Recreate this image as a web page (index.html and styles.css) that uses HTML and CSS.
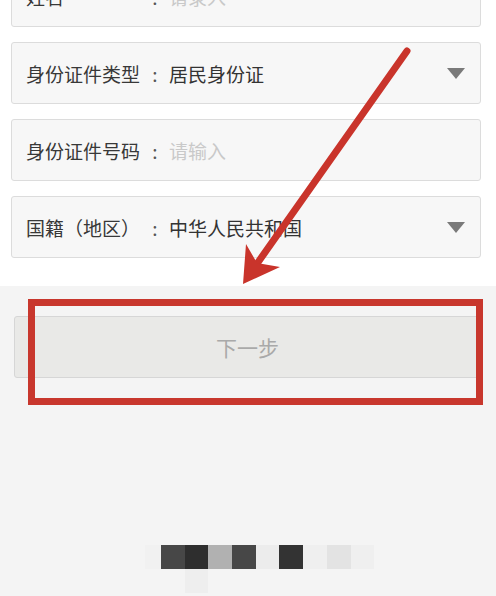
FILE: index.html
```html
<!DOCTYPE html>
<html lang="zh-CN">
<head>
<meta charset="utf-8">
<title>实名认证</title>
<link rel="stylesheet" href="styles.css">
</head>
<body>
<div class="page">
  <section class="form">
    <div class="field">
      <span class="label">姓名</span><span class="colon">:</span><span class="placeholder">请录入</span>
    </div>
    <div class="field">
      <span class="label">身份证件类型</span><span class="colon">:</span><span class="value">居民身份证</span>
      <svg class="caret" width="18" height="11" viewBox="0 0 18 11"><polygon points="0,0 18,0 9,11" fill="#7a7a7a"/></svg>
    </div>
    <div class="field">
      <span class="label">身份证件号码</span><span class="colon">:</span><span class="placeholder">请输入</span>
    </div>
    <div class="field">
      <span class="label">国籍（地区）</span><span class="colon">:</span><span class="value">中华人民共和国</span>
      <svg class="caret" width="18" height="11" viewBox="0 0 18 11"><polygon points="0,0 18,0 9,11" fill="#7a7a7a"/></svg>
    </div>
  </section>
  <section class="footer">
    <button class="next" type="button">下一步</button>
    <div class="mosaic">
      <div class="mrow">
        <span class="px" style="background:#f1f1f1"></span>
        <span class="px" style="background:#474747"></span>
        <span class="px" style="background:#2e2e2e"></span>
        <span class="px" style="background:#b1b1b1"></span>
        <span class="px" style="background:#474747"></span>
        <span class="px" style="background:#ececec"></span>
        <span class="px" style="background:#333333"></span>
        <span class="px" style="background:#efefef"></span>
        <span class="px" style="background:#e3e3e3"></span>
        <span class="px" style="background:#efefef"></span>
      </div>
      <div class="mrow">
        <span class="px" style="background:transparent"></span>
        <span class="px" style="background:transparent"></span>
        <span class="px" style="background:#eeeeee"></span>
      </div>
    </div>
  </section>
  <div class="highlight"></div>
  <svg class="arrow" width="496" height="596" viewBox="0 0 496 596">
    <line x1="407" y1="51" x2="254" y2="268" stroke="#c9342b" stroke-width="7" stroke-linecap="round"/>
    <polygon points="243,284 246,244 257,263 280,267" fill="#c9342b"/>
  </svg>
</div>
</body>
</html>
```
FILE: styles.css
```css
html, body {
  margin: 0;
  padding: 0;
}
body {
  width: 496px;
  height: 596px;
  overflow: hidden;
  background: #f4f4f4;
  font-family: "Noto Sans CJK SC", "Noto Sans", sans-serif;
}
.page {
  position: relative;
  width: 496px;
  height: 596px;
  overflow: hidden;
}
.form {
  background: #ffffff;
  margin-top: -35px;
  padding: 0 15px 28px 11px;
  display: flex;
  flex-direction: column;
  gap: 15px;
}
.field {
  box-sizing: border-box;
  height: 62px;
  border: 1px solid #dcdcdc;
  border-radius: 3px;
  background: #f7f7f7;
  display: flex;
  align-items: center;
  padding: 0 15px 0 14px;
  font-size: 19px;
  color: #383838;
}
.label {
  width: 115px;
  white-space: nowrap;
}
.colon {
  width: 28px;
  text-align: center;
  color: #555;
}
.value {
  color: #333;
}
.placeholder {
  color: #c9c9c9;
}
.caret {
  margin-left: auto;
  display: block;
}
.footer {
  padding: 30px 15px 0 14px;
}
.next {
  display: block;
  box-sizing: border-box;
  width: 100%;
  height: 62px;
  border: 1px solid #d6d6d6;
  border-radius: 3px;
  background: #e9e9e7;
  color: #a9a9a9;
  font-family: "Noto Sans CJK SC", "Noto Sans", sans-serif;
  font-size: 21px;
  padding: 0;
}
.mosaic {
  margin: 167px 0 0 131px;
  display: flex;
  flex-direction: column;
}
.mrow {
  display: flex;
}
.px {
  display: block;
  width: 23.7px;
  height: 24px;
  flex: none;
}
.mrow:first-child .px:first-child {
  width: 16px;
}
.mrow:last-child .px:first-child {
  width: 16px;
}
.highlight {
  position: absolute;
  left: 28px;
  top: 299px;
  width: 455px;
  height: 106px;
  box-sizing: border-box;
  border: 7px solid #c8372d;
}
.arrow {
  position: absolute;
  left: 0;
  top: 0;
  pointer-events: none;
}
```
